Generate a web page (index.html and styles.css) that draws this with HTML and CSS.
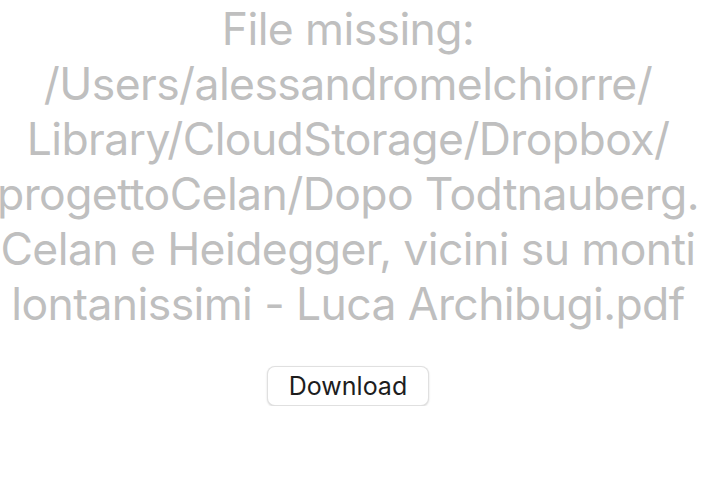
FILE: index.html
```html
<!DOCTYPE html>
<html lang="en">
<head>
  <meta charset="UTF-8" />
  <title>File missing</title>
  <link rel="stylesheet" href="styles.css">
</head>
<body>

  <div class="missing">
    <p class="missing-text">
      <span>File missing:</span>
      <span>/Users/alessandromelchiorre/</span>
      <span>Library/CloudStorage/Dropbox/</span>
      <span>progettoCelan/Dopo Todtnauberg.</span>
      <span>Celan e Heidegger, vicini su monti</span>
      <span>lontanissimi - Luca Archibugi.pdf</span>
    </p>
    <button class="download-btn">Download</button>
  </div>

</body>
</html>
```

FILE: styles.css
```css
body {
  font-family: Inter, "Liberation Sans", sans-serif;
  background-color: #fff;
  margin: 0;
  padding: 2px 20px 0 0;
}

.missing {
  display: flex;
  flex-direction: column;
  align-items: center;
}

.missing-text {
  display: flex;
  flex-direction: column;
  align-items: center;
  margin: 0;
  font-size: 44.5px;
  line-height: 55px;
  letter-spacing: -0.6px;
  color: #bfbfbf;
}

.missing-text span {
  white-space: nowrap;
}

.download-btn {
  margin-top: 34px;
  width: 162px;
  height: 40px;
  font-family: Inter, "Liberation Sans", sans-serif;
  font-size: 25px;
  color: #1d1d1d;
  background-color: #fff;
  border: 1px solid rgba(0, 0, 0, 0.12);
  border-radius: 8px;
  box-shadow: 0 1px 2px rgba(0, 0, 0, 0.15);
}
```
